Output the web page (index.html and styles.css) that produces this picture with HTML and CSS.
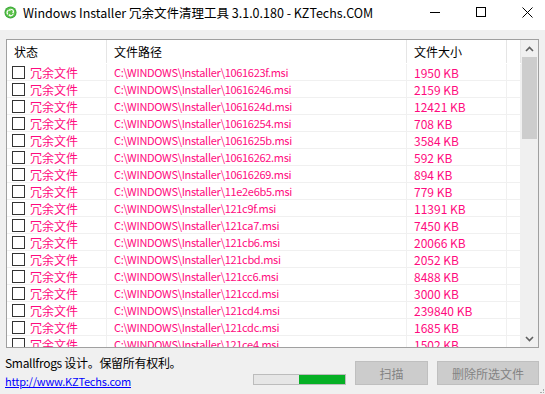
FILE: index.html
```html
<!DOCTYPE html>
<html lang="zh-CN">
<head>
    <meta charset="UTF-8">
    <title>Windows Installer 冗余文件清理工具</title>
    <link rel="stylesheet" href="styles.css">
</head>
<body>
    <div class="window">
        <!-- Title bar -->
        <div class="titlebar">
            <svg class="app-icon" width="13" height="13" viewBox="0 0 14 14">
                <circle cx="7" cy="7" r="6.5" fill="#3aa83a"/>
                <circle cx="7" cy="7" r="5.5" fill="#5cc14a"/>
                <path d="M4 4.5 L7 3 L7 5.5 Z M10 5 L11 8 L8.8 7.2 Z M7.5 11 L4.5 10 L6.4 8.6 Z" fill="#fff"/>
                <path d="M7 3.5 A3.5 3.5 0 0 1 10.4 6.5 M10 8.5 A3.5 3.5 0 0 1 5.5 10.3 M4 9 A3.5 3.5 0 0 1 4.6 4.4" stroke="#fff" stroke-width="1.2" fill="none"/>
            </svg>
            <span class="title">Windows Installer 冗余文件清理工具 3.1.0.180 - KZTechs.COM</span>
            <div class="caption-buttons">
                <span class="cap-btn"><svg width="11" height="11" viewBox="0 0 11 11"><path d="M0 5.5 H10" stroke="#000" stroke-width="1"/></svg></span>
                <span class="cap-btn"><svg width="11" height="11" viewBox="0 0 11 11"><rect x="0.5" y="0.5" width="9" height="9" stroke="#000" fill="none"/></svg></span>
                <span class="cap-btn"><svg width="11" height="11" viewBox="0 0 11 11"><path d="M0.5 0.5 L10.5 10.5 M10.5 0.5 L0.5 10.5" stroke="#000" stroke-width="1"/></svg></span>
            </div>
        </div>

        <!-- File list -->
        <div class="content">
            <div class="listbox">
                <div class="list">
                    <div class="row header">
                        <div class="cell">状态</div>
                        <div class="cell">文件路径</div>
                        <div class="cell">文件大小</div>
                        <div class="cell"></div>
                    </div>
                    <div id="rows"></div>
                </div>
                <div class="scrollbar">
                    <div class="sb-arrow"><svg width="9" height="6" viewBox="0 0 9 6"><path d="M1 5 L4.5 1.5 L8 5" stroke="#606060" stroke-width="1.6" fill="none"/></svg></div>
                    <div class="sb-track"><div class="sb-thumb"></div></div>
                    <div class="sb-arrow"><svg width="9" height="6" viewBox="0 0 9 6"><path d="M1 1 L4.5 4.5 L8 1" stroke="#606060" stroke-width="1.6" fill="none"/></svg></div>
                </div>
            </div>

            <div class="footer">
                <div class="credits">
                    <div class="copyright">Smallfrogs 设计。保留所有权利。</div>
                    <a href="#">http://www.KZTechs.com</a>
                </div>
                <div class="progress"><div class="progress-bar"></div></div>
                <button class="btn btn-scan" disabled>扫描</button>
                <button class="btn btn-delete" disabled>删除所选文件</button>
            </div>
        </div>
        <span class="grip"></span>
    </div>

    <script>
        const files = [
            ['1061623f', 1950], ['10616246', 2159], ['1061624d', 12421], ['10616254', 708],
            ['1061625b', 3584], ['10616262', 592], ['10616269', 894], ['11e2e6b5', 779],
            ['121c9f', 11391], ['121ca7', 7450], ['121cb6', 20066], ['121cbd', 2052],
            ['121cc6', 8488], ['121ccd', 3000], ['121cd4', 239840], ['121cdc', 1685],
            ['121ce4', 1502]
        ];
        const rows = document.getElementById('rows');
        files.forEach(f => {
            const row = document.createElement('div');
            row.className = 'row item';
            row.innerHTML =
                '<div class="cell"><span class="checkbox"></span>冗余文件</div>' +
                '<div class="cell path">C:\\WINDOWS\\Installer\\' + f[0] + '.msi</div>' +
                '<div class="cell">' + f[1] + ' KB</div>' +
                '<div class="cell"></div>';
            rows.appendChild(row);
        });
    </script>
</body>
</html>
```

FILE: styles.css
```css
/* Window */
body {
    margin: 0;
    font-family: 'Noto Sans CJK SC', 'Noto Sans', sans-serif;
    font-size: 12px;
    color: #000;
    background: #f0f0f0;
}

.window {
    position: relative;
    width: 545px;
    height: 394px;
    overflow: hidden;
    background: #f0f0f0;
}

/* Title bar */
.titlebar {
    height: 25px;
    padding-bottom: 5px;
    background: #fff;
    display: flex;
    align-items: center;
}

.app-icon {
    margin: 0 6px 0 4px;
}

.title {
    font-size: 12.5px;
    flex: 1;
    white-space: nowrap;
}

.caption-buttons {
    display: flex;
    height: 25px;
    margin-right: -5px;
}

.cap-btn {
    width: 46px;
    display: flex;
    align-items: center;
    justify-content: center;
}

/* Content */
.content {
    padding: 9px 6px 0 6px;
}

.listbox {
    height: 307px;
    width: 531px;
    border: 1px solid #a0a0a0;
    background: #fff;
    display: flex;
}

.list {
    flex: 1;
    overflow: hidden;
}

.row {
    display: grid;
    grid-template-columns: 100px 300px 100px 1fr;
}

.row .cell {
    white-space: nowrap;
    overflow: hidden;
    display: flex;
    align-items: center;
}

.header {
    height: 24px;
}

.header .cell {
    padding-left: 7px;
    border-right: 1px solid #e5e5e5;
    margin-bottom: 1px;
}

.item {
    height: 17px;
    color: #ff0a7e;
}

.item .cell {
    border-right: 1px solid #f0f0f0;
    border-bottom: 1px solid #f0f0f0;
    padding-left: 7px;
}

.item .cell:first-child {
    padding-left: 5px;
}

.item .path {
    font-size: 11px;
    letter-spacing: -0.3px;
}

.checkbox {
    width: 11px;
    height: 11px;
    border: 1px solid #333;
    margin-right: 5px;
    flex-shrink: 0;
}

/* Scrollbar */
.scrollbar {
    width: 17px;
    background: #f0f0f0;
    display: flex;
    flex-direction: column;
}

.sb-arrow {
    height: 17px;
    display: flex;
    align-items: center;
    justify-content: center;
}

.sb-track {
    flex: 1;
}

.sb-thumb {
    height: 82px;
    margin: 0 1px;
    background: #cdcdcd;
}

/* Footer */
.footer {
    display: flex;
    align-items: flex-start;
    padding-top: 6px;
}

.credits {
    width: 248px;
    line-height: 18px;
    margin-left: -1px;
}

.copyright {
    letter-spacing: -0.3px;
}

.credits a {
    color: #0000ff;
    font-size: 11px;
    letter-spacing: -0.2px;
}

.progress {
    width: 91px;
    height: 9px;
    margin-top: 20px;
    border: 1px solid #bcbcbc;
    background: #e6e6e6;
}

.progress-bar {
    width: 46px;
    height: 100%;
    margin-left: auto;
    background: #06b025;
}

.btn {
    height: 24px;
    margin-top: 7px;
    border: 1px solid #bfbfbf;
    background: #cccccc;
    color: #838383;
    font-family: 'Noto Sans CJK SC', sans-serif;
    font-size: 12px;
    padding: 0;
}

.btn-scan {
    width: 73px;
    margin-left: 9px;
}

.btn-delete {
    width: 102px;
    margin-left: 9px;
}

.grip {
    position: absolute;
    right: 1px;
    bottom: 1px;
    width: 3px;
    height: 3px;
    border-right: 1px dotted #aaa;
    border-bottom: 1px dotted #aaa;
}
```
